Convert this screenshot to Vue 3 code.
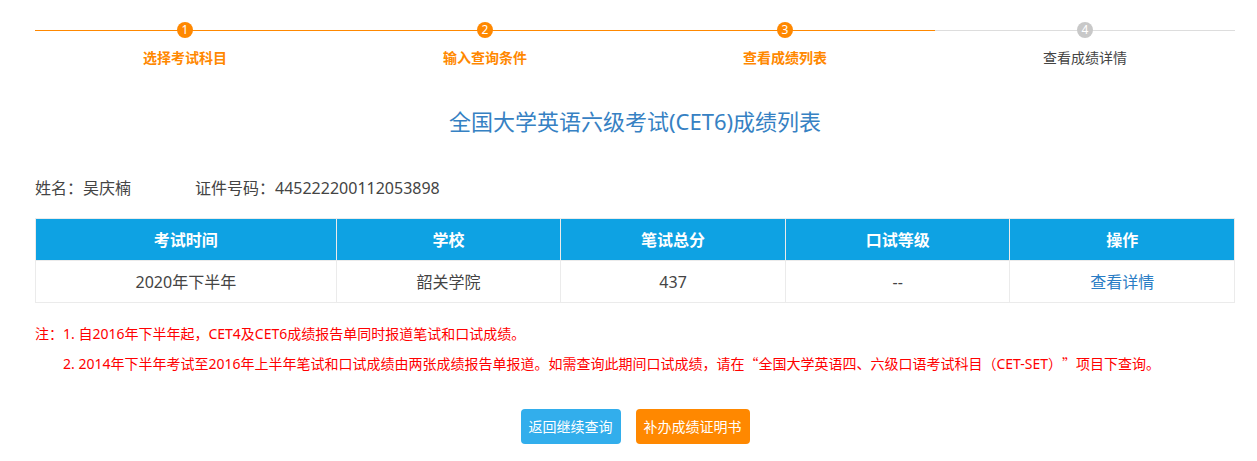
<script setup>
const steps = [
  { label: '选择考试科目', done: true },
  { label: '输入查询条件', done: true },
  { label: '查看成绩列表', done: true },
  { label: '查看成绩详情', done: false }
]
const columns = ['考试时间', '学校', '笔试总分', '口试等级', '操作']
const rows = [{ time: '2020年下半年', school: '韶关学院', written: '437', oral: '--' }]
</script>

<template>
  <main class="page" lang="zh-CN">
    <ol class="steps">
      <li v-for="(s, i) in steps" :key="s.label" class="step" :class="{ done: s.done }">
        <span class="num">{{ i + 1 }}</span>
        <span class="label">{{ s.label }}</span>
      </li>
    </ol>
    <h1>全国大学英语六级考试(CET6)成绩列表</h1>
    <div class="info">
      <span>姓名：吴庆楠</span>
      <span>证件号码：445222200112053898</span>
    </div>
    <table>
      <thead>
        <tr><th v-for="c in columns" :key="c" scope="col">{{ c }}</th></tr>
      </thead>
      <tbody>
        <tr v-for="r in rows" :key="r.time">
          <td>{{ r.time }}</td>
          <td>{{ r.school }}</td>
          <td>{{ r.written }}</td>
          <td>{{ r.oral }}</td>
          <td><a href="#">查看详情</a></td>
        </tr>
      </tbody>
    </table>
    <div class="notes">
      <span class="lead">注：</span>
      <div>
        <p>1. 自2016年下半年起，CET4及CET6成绩报告单同时报道笔试和口试成绩。</p>
        <p>2. 2014年下半年考试至2016年上半年笔试和口试成绩由两张成绩报告单报道。如需查询此期间口试成绩，请在<span class="quote">“</span>全国大学英语四、六级口语考试科目（CET-SET）<span class="quote">”</span>项目下查询。</p>
      </div>
    </div>
    <div class="actions">
      <button type="button" class="back">返回继续查询</button>
      <button type="button" class="apply">补办成绩证明书</button>
    </div>
  </main>
</template>

<style>
body { background: #fff; }
</style>

<style scoped>
.page {
  padding: 22px 22px 16px 35px;
  color: #444;
  font: 16px/24px "Noto Sans", "Noto Sans CJK SC", sans-serif;
  text-spacing-trim: space-all;
}
.steps {
  display: flex;
  margin: 0;
  padding: 0;
  list-style: none;
}
.step {
  flex: 1;
  display: flex;
  flex-direction: column;
  align-items: center;
  font-size: 14px;
  line-height: 20px;
  background: linear-gradient(#ddd, #ddd) 0 8px / 100% 1px no-repeat;
}
.step.done {
  color: #f80;
  font-weight: 700;
  background-image: linear-gradient(#f80, #f80);
}
.num {
  width: 16px;
  height: 16px;
  border-radius: 50%;
  background: #c8c8c8;
  color: #fff;
  font-size: 12px;
  font-weight: 400;
  line-height: 16px;
  text-align: center;
}
.done .num { background: #f80; }
.label { margin-top: 10px; }
h1 {
  margin: 37px 0 0;
  color: #3681c3;
  font-size: 22px;
  font-weight: 400;
  line-height: 32px;
  text-align: center;
}
.info {
  display: flex;
  gap: 64px;
  margin: 39px 0 18px;
}
table {
  width: 100%;
  border-collapse: collapse;
  table-layout: fixed;
}
th, td {
  height: 41px;
  padding: 0;
  border: 1px solid #ebebeb;
  text-align: center;
}
th {
  background: #0ea2e3;
  color: #fff;
  font-weight: 700;
}
th:first-child { width: 25%; }
a { color: #2a7dc5; text-decoration: none; }
.notes {
  display: flex;
  margin-top: 16px;
  color: #f00;
  font-size: 14px;
  line-height: 30px;
}
.lead { flex: none; }
.quote {
  font-family: "Noto Sans CJK SC", sans-serif;
  line-height: 20px;
}
p { margin: 0; }
.actions {
  display: flex;
  justify-content: center;
  gap: 15px;
  margin-top: 30px;
}
button {
  height: 35px;
  padding: 0 8px;
  border: 0;
  border-radius: 4px;
  color: #fff;
  font: inherit;
  font-size: 14px;
}
.back { background: #32aeec; }
.apply { background: #f80; }
</style>
